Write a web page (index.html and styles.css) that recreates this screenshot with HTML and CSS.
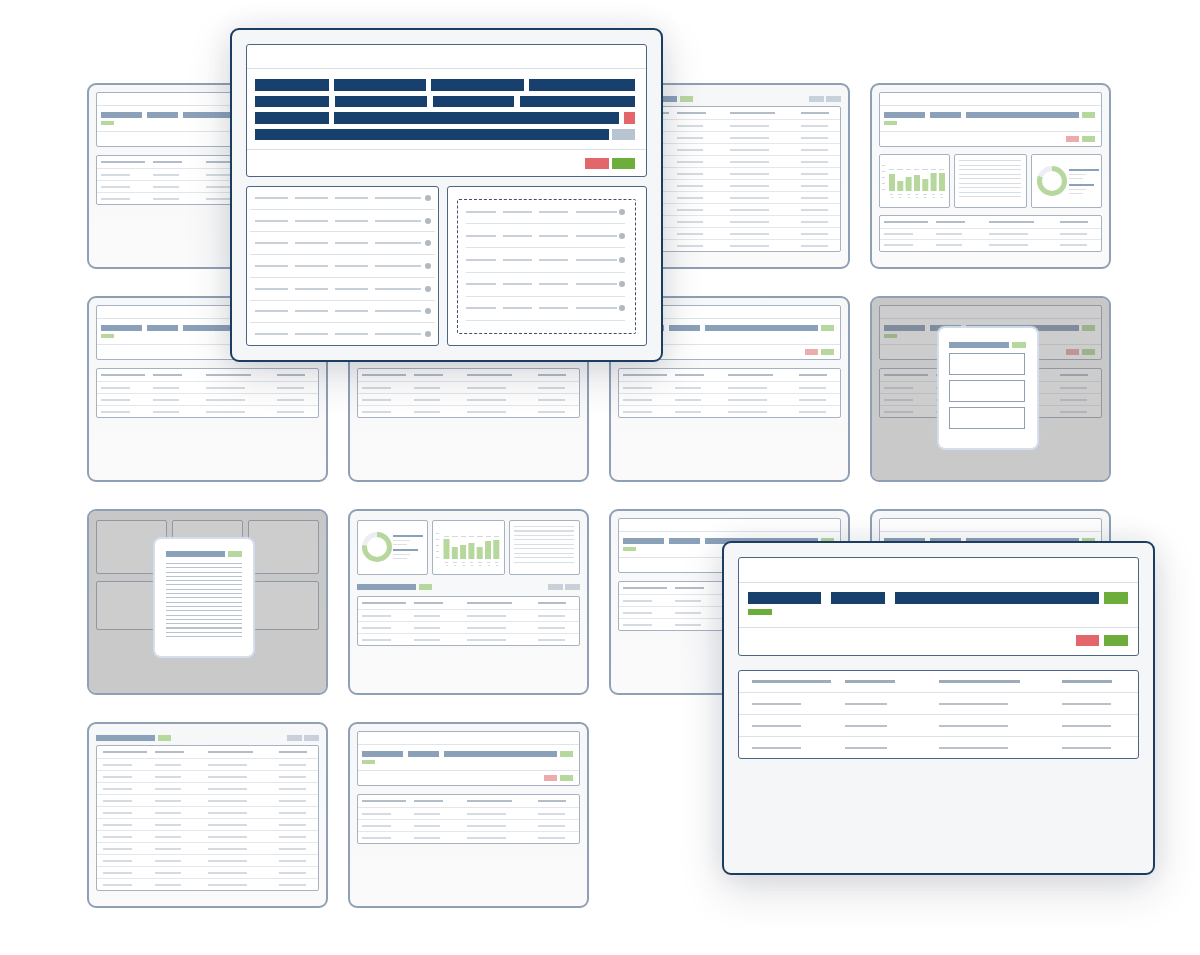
FILE: index.html
```html
<!DOCTYPE html>
<html>
<head>
<meta charset="utf-8">
<link rel="stylesheet" href="styles.css">
</head>
<body>
<div class="stage">
  <div class="grid">
    <!-- r1c1 form -->
    <div class="card">
      <div class="panel head"><div class="strip"></div><div class="bars"><b class="b1"></b><b class="b2"></b><b class="b3"></b><b class="ok"></b></div><b class="gsm"></b><div class="sep"></div><div class="btns"><b class="no"></b><b class="ok"></b></div></div>
      <div class="panel tbl"><div class="tr hd"><i></i><i></i><i></i><i></i></div><div class="tr"><i></i><i></i><i></i><i></i></div><div class="tr"><i></i><i></i><i></i><i></i></div><div class="tr"><i></i><i></i><i></i><i></i></div></div>
    </div>
    <!-- r1c2 form (covered) -->
    <div class="card">
      <div class="panel head"><div class="strip"></div><div class="bars"><b class="b1"></b><b class="b2"></b><b class="b3"></b><b class="ok"></b></div><b class="gsm"></b><div class="sep"></div><div class="btns"><b class="no"></b><b class="ok"></b></div></div>
      <div class="panel tbl"><div class="tr hd"><i></i><i></i><i></i><i></i></div><div class="tr"><i></i><i></i><i></i><i></i></div><div class="tr"><i></i><i></i><i></i><i></i></div><div class="tr"><i></i><i></i><i></i><i></i></div></div>
    </div>
    <!-- r1c3 list -->
    <div class="card list">
      <div class="toolbar"><b class="tb"></b><b class="ok"></b><span class="fill"></span><b class="gr"></b><b class="gr"></b></div>
      <div class="panel ltbl">
        <div class="tr hd"><i></i><i></i><i></i><i></i></div>
        <div class="tr"><i></i><i></i><i></i><i></i></div><div class="tr"><i></i><i></i><i></i><i></i></div><div class="tr"><i></i><i></i><i></i><i></i></div><div class="tr"><i></i><i></i><i></i><i></i></div><div class="tr"><i></i><i></i><i></i><i></i></div><div class="tr"><i></i><i></i><i></i><i></i></div><div class="tr"><i></i><i></i><i></i><i></i></div><div class="tr"><i></i><i></i><i></i><i></i></div><div class="tr"><i></i><i></i><i></i><i></i></div><div class="tr"><i></i><i></i><i></i><i></i></div><div class="tr"><i></i><i></i><i></i><i></i></div>
      </div>
    </div>
    <!-- r1c4 dashboard -->
    <div class="card">
      <div class="panel head"><div class="strip"></div><div class="bars"><b class="b1"></b><b class="b2"></b><b class="b3"></b><b class="ok"></b></div><b class="gsm"></b><div class="sep"></div><div class="btns"><b class="no"></b><b class="ok"></b></div></div>
      <div class="widgets">
        <div class="w">
          <svg class="chart" viewBox="0 0 70 52" width="70" height="52">
            <g fill="#d3d8de">
              <rect x="2" y="10" width="3" height="1"/><rect x="2" y="16" width="3" height="1"/><rect x="2" y="22" width="3" height="1"/><rect x="2" y="28" width="3" height="1"/><rect x="2" y="34" width="3" height="1"/>
              <rect x="9" y="14" width="5" height="1"/><rect x="17" y="14" width="6" height="1"/><rect x="26" y="14" width="5" height="1"/><rect x="34" y="14" width="5" height="1"/><rect x="42" y="14" width="6" height="1"/><rect x="51" y="14" width="5" height="1"/><rect x="59" y="14" width="5" height="1"/>
              <rect x="10" y="39" width="3" height="1"/><rect x="18" y="39" width="4" height="1"/><rect x="27" y="39" width="3" height="1"/><rect x="35" y="39" width="3" height="1"/><rect x="43" y="39" width="4" height="1"/><rect x="52" y="39" width="3" height="1"/><rect x="60" y="39" width="3" height="1"/>
              <rect x="11" y="42" width="2" height="1"/><rect x="19" y="42" width="2" height="1"/><rect x="28" y="42" width="2" height="1"/><rect x="36" y="42" width="2" height="1"/><rect x="44" y="42" width="2" height="1"/><rect x="53" y="42" width="2" height="1"/><rect x="61" y="42" width="2" height="1"/>
            </g>
            <g fill="#b7d89c">
              <rect x="9" y="19" width="6" height="17"/><rect x="17.3" y="26" width="6" height="10"/><rect x="25.6" y="22" width="6" height="14"/><rect x="34" y="20" width="6" height="16"/><rect x="42.3" y="24" width="6" height="12"/><rect x="50.6" y="18" width="6" height="18"/><rect x="59" y="18" width="6" height="18"/>
            </g>
          </svg>
        </div>
        <div class="w"><div class="ll"></div></div>
        <div class="w">
          <svg class="donut" viewBox="0 0 70 52" width="70" height="52">
            <circle cx="20" cy="26" r="12.5" fill="none" stroke="#eceef1" stroke-width="5"/>
            <circle cx="20" cy="26" r="12.5" fill="none" stroke="#b7d89c" stroke-width="5" stroke-dasharray="63 100" transform="rotate(-90 20 26)"/>
            <rect x="37" y="14" width="30" height="2" fill="#8ba0b9"/>
            <rect x="37" y="19" width="17" height="1" fill="#dde1e6"/>
            <rect x="37" y="23" width="14" height="1" fill="#dde1e6"/>
            <rect x="37" y="29" width="25" height="2" fill="#8ba0b9"/>
            <rect x="37" y="34" width="17" height="1" fill="#dde1e6"/>
            <rect x="37" y="38" width="14" height="1" fill="#dde1e6"/>
          </svg>
        </div>
      </div>
      <div class="panel tbl t3"><div class="tr hd"><i></i><i></i><i></i><i></i></div><div class="tr"><i></i><i></i><i></i><i></i></div><div class="tr"><i></i><i></i><i></i><i></i></div></div>
    </div>

    <!-- r2c1 form -->
    <div class="card">
      <div class="panel head"><div class="strip"></div><div class="bars"><b class="b1"></b><b class="b2"></b><b class="b3"></b><b class="ok"></b></div><b class="gsm"></b><div class="sep"></div><div class="btns"><b class="no"></b><b class="ok"></b></div></div>
      <div class="panel tbl"><div class="tr hd"><i></i><i></i><i></i><i></i></div><div class="tr"><i></i><i></i><i></i><i></i></div><div class="tr"><i></i><i></i><i></i><i></i></div><div class="tr"><i></i><i></i><i></i><i></i></div></div>
    </div>
    <!-- r2c2 form -->
    <div class="card">
      <div class="panel head"><div class="strip"></div><div class="bars"><b class="b1"></b><b class="b2"></b><b class="b3"></b><b class="ok"></b></div><b class="gsm"></b><div class="sep"></div><div class="btns"><b class="no"></b><b class="ok"></b></div></div>
      <div class="panel tbl"><div class="tr hd"><i></i><i></i><i></i><i></i></div><div class="tr"><i></i><i></i><i></i><i></i></div><div class="tr"><i></i><i></i><i></i><i></i></div><div class="tr"><i></i><i></i><i></i><i></i></div></div>
    </div>
    <!-- r2c3 form -->
    <div class="card">
      <div class="panel head"><div class="strip"></div><div class="bars"><b class="b1"></b><b class="b2"></b><b class="b3"></b><b class="ok"></b></div><b class="gsm"></b><div class="sep"></div><div class="btns"><b class="no"></b><b class="ok"></b></div></div>
      <div class="panel tbl"><div class="tr hd"><i></i><i></i><i></i><i></i></div><div class="tr"><i></i><i></i><i></i><i></i></div><div class="tr"><i></i><i></i><i></i><i></i></div><div class="tr"><i></i><i></i><i></i><i></i></div></div>
    </div>
    <!-- r2c4 form dimmed + modal -->
    <div class="card">
      <div class="panel head"><div class="strip"></div><div class="bars"><b class="b1"></b><b class="b2"></b><b class="b3"></b><b class="ok"></b></div><b class="gsm"></b><div class="sep"></div><div class="btns"><b class="no"></b><b class="ok"></b></div></div>
      <div class="panel tbl"><div class="tr hd"><i></i><i></i><i></i><i></i></div><div class="tr"><i></i><i></i><i></i><i></i></div><div class="tr"><i></i><i></i><i></i><i></i></div><div class="tr"><i></i><i></i><i></i><i></i></div></div>
      <div class="dim"></div>
      <div class="modal m1">
        <div class="mhead"><b class="mb"></b><b class="ok"></b></div>
        <div class="mbox"></div><div class="mbox"></div><div class="mbox"></div>
      </div>
    </div>

    <!-- r3c1 boxes dimmed + doc modal -->
    <div class="card boxes">
      <div class="bx-grid">
        <div class="bx"></div><div class="bx"></div><div class="bx"></div>
        <div class="bx"></div><div class="bx"></div><div class="bx"></div>
      </div>
      <div class="dim"></div>
      <div class="modal m2">
        <div class="mhead"><b class="mb"></b><b class="ok"></b></div>
        <div class="doc"></div>
      </div>
    </div>
    <!-- r3c2 dashboard 2 -->
    <div class="card dash2">
      <div class="widgets">
        <div class="w">
          <svg class="donut" viewBox="0 0 70 53" width="70" height="53">
            <circle cx="19" cy="26" r="12.5" fill="none" stroke="#eceef1" stroke-width="5"/>
            <circle cx="19" cy="26" r="12.5" fill="none" stroke="#b7d89c" stroke-width="5" stroke-dasharray="60 100" transform="rotate(-90 19 26)"/>
            <rect x="35" y="14" width="30" height="2" fill="#8ba0b9"/>
            <rect x="35" y="19" width="17" height="1" fill="#dde1e6"/>
            <rect x="35" y="23" width="14" height="1" fill="#dde1e6"/>
            <rect x="35" y="28" width="25" height="2" fill="#8ba0b9"/>
            <rect x="35" y="33" width="17" height="1" fill="#dde1e6"/>
            <rect x="35" y="37" width="14" height="1" fill="#dde1e6"/>
          </svg>
        </div>
        <div class="w">
          <svg class="chart" viewBox="0 0 70 53" width="70" height="53">
            <g fill="#d3d8de">
              <rect x="3" y="12" width="3" height="1"/><rect x="3" y="18" width="3" height="1"/><rect x="3" y="24" width="3" height="1"/><rect x="3" y="30" width="3" height="1"/><rect x="3" y="36" width="3" height="1"/>
              <rect x="11" y="15" width="5" height="1"/><rect x="19" y="15" width="6" height="1"/><rect x="28" y="15" width="5" height="1"/><rect x="36" y="15" width="5" height="1"/><rect x="44" y="15" width="6" height="1"/><rect x="53" y="15" width="5" height="1"/><rect x="61" y="15" width="5" height="1"/>
              <rect x="12" y="41" width="3" height="1"/><rect x="20" y="41" width="4" height="1"/><rect x="29" y="41" width="3" height="1"/><rect x="37" y="41" width="3" height="1"/><rect x="45" y="41" width="4" height="1"/><rect x="54" y="41" width="3" height="1"/><rect x="62" y="41" width="3" height="1"/>
              <rect x="13" y="44" width="2" height="1"/><rect x="21" y="44" width="2" height="1"/><rect x="30" y="44" width="2" height="1"/><rect x="38" y="44" width="2" height="1"/><rect x="46" y="44" width="2" height="1"/><rect x="55" y="44" width="2" height="1"/><rect x="63" y="44" width="2" height="1"/>
            </g>
            <g fill="#b7d89c">
              <rect x="10.5" y="18" width="6" height="20"/><rect x="18.8" y="26" width="6" height="12"/><rect x="27.1" y="24" width="6" height="14"/><rect x="35.4" y="22" width="6" height="16"/><rect x="43.7" y="26" width="6" height="12"/><rect x="52" y="20" width="6" height="18"/><rect x="60.3" y="19" width="6" height="19"/>
            </g>
          </svg>
        </div>
        <div class="w"><div class="ll"></div></div>
      </div>
      <div class="toolbar"><b class="tb"></b><b class="ok"></b><span class="fill"></span><b class="gr"></b><b class="gr"></b></div>
      <div class="panel tbl"><div class="tr hd"><i></i><i></i><i></i><i></i></div><div class="tr"><i></i><i></i><i></i><i></i></div><div class="tr"><i></i><i></i><i></i><i></i></div><div class="tr"><i></i><i></i><i></i><i></i></div></div>
    </div>
    <!-- r3c3 form -->
    <div class="card">
      <div class="panel head"><div class="strip"></div><div class="bars"><b class="b1"></b><b class="b2"></b><b class="b3"></b><b class="ok"></b></div><b class="gsm"></b><div class="sep"></div><div class="btns"><b class="no"></b><b class="ok"></b></div></div>
      <div class="panel tbl"><div class="tr hd"><i></i><i></i><i></i><i></i></div><div class="tr"><i></i><i></i><i></i><i></i></div><div class="tr"><i></i><i></i><i></i><i></i></div><div class="tr"><i></i><i></i><i></i><i></i></div></div>
    </div>
    <!-- r3c4 form -->
    <div class="card">
      <div class="panel head"><div class="strip"></div><div class="bars"><b class="b1"></b><b class="b2"></b><b class="b3"></b><b class="ok"></b></div><b class="gsm"></b><div class="sep"></div><div class="btns"><b class="no"></b><b class="ok"></b></div></div>
      <div class="panel tbl"><div class="tr hd"><i></i><i></i><i></i><i></i></div><div class="tr"><i></i><i></i><i></i><i></i></div><div class="tr"><i></i><i></i><i></i><i></i></div><div class="tr"><i></i><i></i><i></i><i></i></div></div>
    </div>

    <!-- r4c1 list -->
    <div class="card list">
      <div class="toolbar"><b class="tb"></b><b class="ok"></b><span class="fill"></span><b class="gr"></b><b class="gr"></b></div>
      <div class="panel ltbl">
        <div class="tr hd"><i></i><i></i><i></i><i></i></div>
        <div class="tr"><i></i><i></i><i></i><i></i></div><div class="tr"><i></i><i></i><i></i><i></i></div><div class="tr"><i></i><i></i><i></i><i></i></div><div class="tr"><i></i><i></i><i></i><i></i></div><div class="tr"><i></i><i></i><i></i><i></i></div><div class="tr"><i></i><i></i><i></i><i></i></div><div class="tr"><i></i><i></i><i></i><i></i></div><div class="tr"><i></i><i></i><i></i><i></i></div><div class="tr"><i></i><i></i><i></i><i></i></div><div class="tr"><i></i><i></i><i></i><i></i></div><div class="tr"><i></i><i></i><i></i><i></i></div>
      </div>
    </div>
    <!-- r4c2 form -->
    <div class="card">
      <div class="panel head"><div class="strip"></div><div class="bars"><b class="b1"></b><b class="b2"></b><b class="b3"></b><b class="ok"></b></div><b class="gsm"></b><div class="sep"></div><div class="btns"><b class="no"></b><b class="ok"></b></div></div>
      <div class="panel tbl"><div class="tr hd"><i></i><i></i><i></i><i></i></div><div class="tr"><i></i><i></i><i></i><i></i></div><div class="tr"><i></i><i></i><i></i><i></i></div><div class="tr"><i></i><i></i><i></i><i></i></div></div>
    </div>
  </div>

  <!-- Big card 1 -->
  <div class="big big1">
    <div class="bpanel bhead">
      <div class="bstrip"></div>
      <div class="brows">
        <div class="brow"><b class="w74"></b><b class="w92"></b><b class="w93"></b><b class="w106"></b></div>
        <div class="brow"><b class="w74"></b><b class="w92"></b><b class="w81"></b><b class="w115"></b></div>
        <div class="brow"><b class="w74"></b><b class="w285"></b><b class="w11 red"></b></div>
        <div class="brow"><b class="w354"></b><b class="w23 gray"></b></div>
      </div>
      <div class="bsep"></div>
      <div class="bbtns"><b class="red"></b><b class="green"></b></div>
    </div>
    <div class="blower">
      <div class="bpanel lp">
        <div class="lrow"><i></i><i></i><i></i><i></i><span class="dot"></span></div>
        <div class="lrow"><i></i><i></i><i></i><i></i><span class="dot"></span></div>
        <div class="lrow"><i></i><i></i><i></i><i></i><span class="dot"></span></div>
        <div class="lrow"><i></i><i></i><i></i><i></i><span class="dot"></span></div>
        <div class="lrow"><i></i><i></i><i></i><i></i><span class="dot"></span></div>
        <div class="lrow"><i></i><i></i><i></i><i></i><span class="dot"></span></div>
        <div class="lrow"><i></i><i></i><i></i><i></i><span class="dot"></span></div>
      </div>
      <div class="bpanel rp">
        <div class="dash">
          <div class="drow"><i></i><i></i><i></i><i></i><span class="dot"></span></div>
          <div class="drow"><i></i><i></i><i></i><i></i><span class="dot"></span></div>
          <div class="drow"><i></i><i></i><i></i><i></i><span class="dot"></span></div>
          <div class="drow"><i></i><i></i><i></i><i></i><span class="dot"></span></div>
          <div class="drow"><i></i><i></i><i></i><i></i><span class="dot"></span></div>
        </div>
      </div>
    </div>
  </div>

  <!-- Big card 2 -->
  <div class="big big2">
    <div class="bpanel bhead2">
      <div class="bstrip2"></div>
      <div class="bars2"><b class="x73"></b><b class="x54"></b><b class="x204"></b><b class="x24 green"></b></div>
      <b class="gsm2"></b>
      <div class="bsep2"></div>
      <div class="bbtns2"><b class="red"></b><b class="green"></b></div>
    </div>
    <div class="bpanel btbl">
      <div class="btr bhd"><i></i><i></i><i></i><i></i></div>
      <div class="btr"><i></i><i></i><i></i><i></i></div>
      <div class="btr"><i></i><i></i><i></i><i></i></div>
      <div class="btr"><i></i><i></i><i></i><i></i></div>
    </div>
  </div>
</div>
</body>
</html>
```

FILE: styles.css
```css
* { box-sizing: border-box; margin: 0; padding: 0; }
html, body { margin: 0; background: #ffffff; font-family: "Liberation Sans", Arial, sans-serif; }
b, i { display: block; font-style: normal; }

.stage { position: relative; width: 1200px; height: 955px; overflow: hidden; background: #fff; }

.grid {
  display: grid;
  grid-template-columns: repeat(4, 241px);
  grid-auto-rows: 186px;
  column-gap: 20px;
  row-gap: 27px;
  padding: 83px 0 0 87px;
}

/* ---------- small card ---------- */
.card {
  position: relative;
  border: 2px solid #8fa0b5;
  border-radius: 9px;
  background: linear-gradient(to bottom, #f6f7f8, #fafafb);
  padding: 7px;
  display: flex;
  flex-direction: column;
  overflow: hidden;
}
.panel { background: #fff; border: 1px solid #a7b2c0; border-radius: 2px; flex: none; }

.head { height: 55px; display: flex; flex-direction: column; }
.strip { height: 13px; border-bottom: 1px solid #e0e4e8; flex: none; }
.bars { display: flex; height: 6px; margin: 6px 6px 0 4px; flex: none; }
.bars b { height: 6px; background: #8ba0b9; }
.bars .b1 { width: 41px; margin-right: 5px; }
.bars .b2 { width: 31px; margin-right: 5px; }
.bars .b3 { flex: 1; margin-right: 3px; }
.bars .ok { width: 13px; background: #b7d89c; }
.gsm { width: 13px; height: 4px; background: #b7d89c; margin: 3px 0 0 4px; flex: none; }
.sep { border-top: 1px solid #e0e4e8; margin-top: 6px; flex: none; }
.btns { display: flex; justify-content: flex-end; gap: 3px; margin: 4px 6px 0 0; }
.btns b { width: 13px; height: 6px; }
.btns .no { background: #eeabae; }
.btns .ok { background: #b7d89c; }

.tbl { margin-top: 8px; }
.tr {
  display: grid;
  grid-template-columns: 52px 53px 71px 1fr;
  align-items: center;
  height: 12px;
  padding-left: 4px;
  border-top: 1px solid #e3e6ea;
}
.tr:first-child { border-top: 0; }
.tr i { height: 2px; background: #d6dbe1; }
.tr i:nth-child(1) { width: 29px; }
.tr i:nth-child(2) { width: 26px; }
.tr i:nth-child(3) { width: 39px; }
.tr i:nth-child(4) { width: 27px; }
.tr.hd i { background: #b3bdc9; }
.tr.hd i:nth-child(1) { width: 44px; }
.tr.hd i:nth-child(2) { width: 29px; }
.tr.hd i:nth-child(3) { width: 45px; }
.tr.hd i:nth-child(4) { width: 28px; }
.t3 .tr { height: 11.5px; }

/* list card */
.list { padding: 11px 7px 7px; }
.toolbar { display: flex; align-items: center; gap: 3px; height: 6px; flex: none; }
.toolbar b { height: 6px; }
.toolbar .tb { width: 59px; background: #8ba0b9; }
.toolbar .ok { width: 13px; background: #b7d89c; }
.toolbar .fill { flex: 1; }
.toolbar .gr { width: 15px; background: #c8d0da; margin-left: -1px; }
.ltbl { margin-top: 4px; }
.ltbl .tr { padding-left: 6px; }

/* dashboard widgets */
.widgets { display: grid; grid-template-columns: 71px 73px 1fr; gap: 4px; margin-top: 7px; height: 54px; flex: none; }
.w { background: #fff; border: 1px solid #a7b2c0; border-radius: 2px; overflow: hidden; }
.w svg { display: block; }
.ll {
  margin: 5px 5px 0 4px;
  height: 37px;
  background: repeating-linear-gradient(to bottom, #d9dee3 0, #d9dee3 1px, transparent 1px, transparent 4.5px);
}
.t3 { margin-top: 7px; }

.dash2 .widgets { margin-top: 2px; height: 55px; grid-template-columns: 71px 73px 1fr; }
.dash2 .toolbar { margin-top: 9px; }
.dash2 .tbl { margin-top: 6px; }

/* dim + modals */
.dim { position: absolute; inset: 0; background: rgba(100, 100, 100, 0.32); border-radius: 7px; }
.modal {
  position: absolute;
  background: #fff;
  border-radius: 6px;
  box-shadow: 0 0 0 2px rgba(214, 224, 236, 0.9), 0 0 6px rgba(190, 205, 225, 0.8);
  padding: 14px 10px 0;
}
.m1 { left: 67px; top: 30px; width: 98px; height: 120px; }
.m2 { left: 66px; top: 28px; width: 98px; height: 117px; padding: 12px 11px 0; }
.mhead { display: flex; gap: 3px; height: 6px; }
.mhead .mb { width: 60px; height: 6px; background: #8ba0b9; }
.mhead .ok { width: 14px; height: 6px; background: #b7d89c; }
.mbox { border: 1px solid #8fa0b5; height: 22px; margin-top: 5px; width: 76px; }
.doc {
  margin-top: 6px;
  width: 76px;
  height: 74px;
  background: repeating-linear-gradient(to bottom, #b9c3cf 0, #b9c3cf 1px, transparent 1px, transparent 4.3px);
}

.boxes .bx-grid { display: grid; grid-template-columns: repeat(3, 1fr); grid-template-rows: 54px 49px; gap: 7px 5px; margin-top: 2px; }
.bx { background: #fff; border: 1px solid #a7b2c0; border-radius: 2px; }

/* ---------- big cards ---------- */
.big {
  position: absolute;
  width: 433px;
  height: 334px;
  border: 2px solid #1c3c60;
  border-radius: 9px;
  background: #f5f6f7;
  padding: 14px;
  box-shadow: 0 14px 44px rgba(30, 40, 60, 0.16), 0 0 26px rgba(30, 40, 60, 0.08);
  z-index: 2;
}
.big1 { left: 230px; top: 28px; }
.big2 { left: 722px; top: 541px; }
.bpanel { background: #fff; border: 1px solid #4c6586; border-radius: 3px; }

.bhead { height: 133px; display: flex; flex-direction: column; }
.bstrip { height: 24px; border-bottom: 1px solid #dadee3; flex: none; }
.brows { margin: 10px 11px 0 8px; display: flex; flex-direction: column; gap: 5px; }
.brow { display: flex; justify-content: space-between; height: 11.5px; }
.brow b { height: 11.5px; background: #17406c; }
.brow .w74 { width: 74px; }
.brow .w92 { width: 92px; }
.brow .w93 { width: 93px; }
.brow .w106 { width: 106px; }
.brow .w81 { width: 81px; }
.brow .w115 { width: 115px; }
.brow .w285 { width: 285px; }
.brow .w354 { width: 354px; }
.brow .w11 { width: 11px; }
.brow .w23 { width: 23px; }
.brow .red { background: #e3676a; }
.brow .gray { background: #b8c4d2; }
.bsep { border-top: 1px solid #dadee3; margin-top: 9px; flex: none; }
.bbtns { display: flex; justify-content: flex-end; gap: 3px; margin: 8px 11px 0 0; }
.bbtns b { width: 24px; height: 11px; }
.red { background: #e3676a; }
.green { background: #6dad3c; }
.bbtns .green { width: 23px; }

.blower { display: grid; grid-template-columns: 193px 1fr; gap: 8px; margin-top: 9px; height: 160px; }
.lp { display: flex; flex-direction: column; padding: 0 3px; }
.lrow { flex: 1; display: flex; align-items: center; padding: 0 4px 0 5px; border-bottom: 1px solid #dfe3e7; }
.lrow:last-child { border-bottom: 0; }
.lrow i, .drow i { height: 2px; background: #c9d0d8; }
.lrow i:nth-child(1), .lrow i:nth-child(2), .lrow i:nth-child(3) { width: 33px; margin-right: 7px; }
.lrow i:nth-child(4) { width: 46px; }
.dot { width: 6px; height: 6px; border-radius: 50%; background: #b1b8c0; margin-left: auto; }

.rp { padding: 12px 10px 11px 9px; }
.dash { height: 100%; border: 1.5px dashed #3e5069; border-radius: 2px; padding: 0 10px 12px 8px; display: flex; flex-direction: column; }
.drow { flex: 1; display: flex; align-items: center; border-bottom: 1px solid #dfe3e7; }
.drow i:nth-child(1) { width: 30px; margin-right: 7px; }
.drow i:nth-child(2) { width: 29px; margin-right: 7px; }
.drow i:nth-child(3) { width: 29px; margin-right: 8px; }
.drow i:nth-child(4) { width: 41px; }

.bhead2 { height: 99px; display: flex; flex-direction: column; }
.bstrip2 { height: 25px; border-bottom: 1px solid #dadee3; flex: none; }
.bars2 { display: flex; margin: 9px 10px 0 9px; height: 12px; }
.bars2 b { height: 12px; background: #17406c; }
.bars2 .x73 { width: 73px; margin-right: 10px; }
.bars2 .x54 { width: 54px; margin-right: 10px; }
.bars2 .x204 { flex: 1; margin-right: 5px; }
.bars2 .x24 { width: 24px; background: #6dad3c; }
.gsm2 { width: 24px; height: 6px; background: #6dad3c; margin: 5px 0 0 9px; }
.bsep2 { border-top: 1px solid #dadee3; margin-top: 12px; }
.bbtns2 { display: flex; justify-content: flex-end; gap: 5px; margin: 7px 10px 0 0; }
.bbtns2 b { width: 23px; height: 11px; }
.bbtns2 .green { width: 24px; }

.btbl { margin-top: 14px; height: 89px; display: flex; flex-direction: column; }
.btr {
  display: grid;
  grid-template-columns: 93px 94px 123px 1fr;
  align-items: center;
  padding-left: 13px;
  height: 22px;
  border-top: 1px solid #dde1e6;
}
.btr:first-child { border-top: 0; height: 21px; }
.btr:last-child { flex: 1; }
.btr i { height: 2px; background: #b9c2cc; }
.btr i:nth-child(1) { width: 49px; }
.btr i:nth-child(2) { width: 42px; }
.btr i:nth-child(3) { width: 69px; }
.btr i:nth-child(4) { width: 49px; }
.btr.bhd i { height: 2.5px; background: #9eabbb; }
.btr.bhd i:nth-child(1) { width: 79px; }
.btr.bhd i:nth-child(2) { width: 50px; }
.btr.bhd i:nth-child(3) { width: 81px; }
.btr.bhd i:nth-child(4) { width: 50px; }
```
